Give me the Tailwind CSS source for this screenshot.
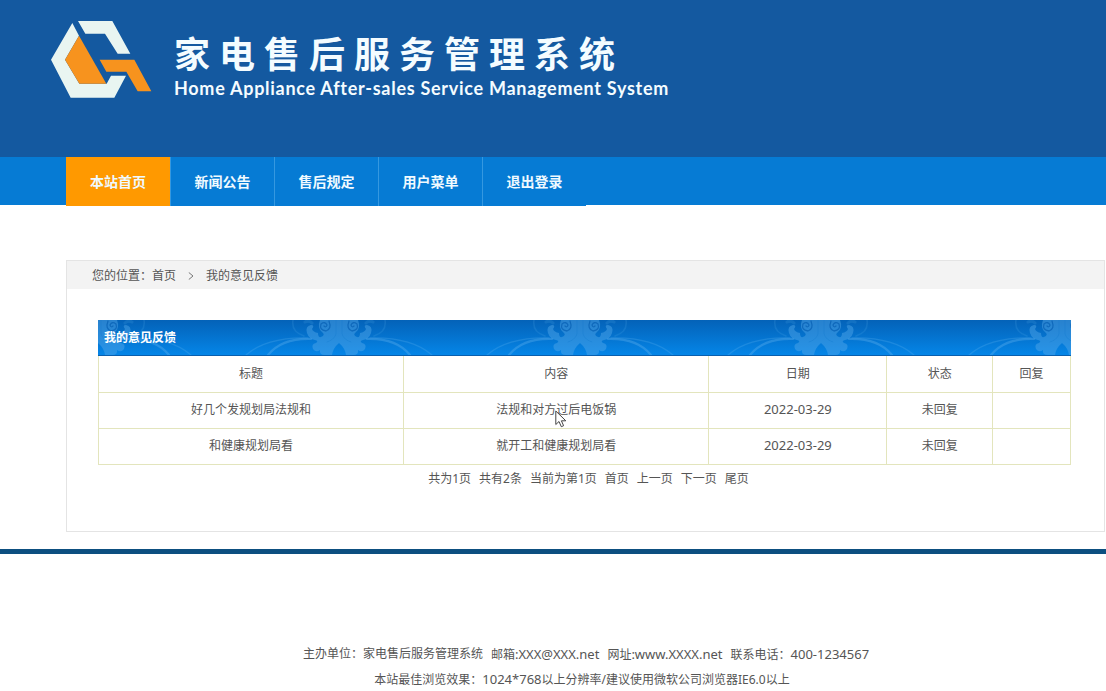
<!DOCTYPE html>
<html lang="zh-CN">
<head>
<meta charset="utf-8">
<title>家电售后服务管理系统</title>
<script src="https://cdn.jsdelivr.net/npm/@tailwindcss/browser@4"></script>
</head>
<body class="bg-white font-['Noto_Sans','Noto_Sans_CJK_SC',sans-serif] text-xs text-[#555]">
<header>
  <div class="flex h-[157px] items-start gap-[22px] bg-[#1459a0] pl-[51px] pt-[21px]">
    <svg class="h-[77px] w-[101px] shrink-0" viewBox="62 62 303 231" aria-hidden="true">
      <path fill="#e9f5f1" d="M126 68 146 106 104 178 147 250H229L242 226H287L252 292H121L62 178Z"/>
      <path fill="#e9f5f1" d="M143 62H246L300 160H262L224 100H165Z"/>
      <path fill="#f7931e" d="M146 106 228 250H147L104 178Z"/>
      <path fill="#f7931e" d="M208 178H312L363 273H322L288 214H228Z"/>
    </svg>
    <div class="pt-[13px] text-[#f4fcff]">
      <h1 class="font-['Liberation_Sans','Noto_Sans_CJK_SC',sans-serif] text-4xl/[44px] font-bold tracking-[0.25em]">家电售后服务管理系统</h1>
      <p class="font-['Lato',sans-serif] text-lg/[20px] font-bold tracking-[0.04em]">Home Appliance After-sales Service Management System</p>
    </div>
  </div>
  <nav class="h-12 bg-[#067bd4] pl-[66px]">
    <ul class="flex text-sm font-bold text-[#f0faff]">
      <li><a href="#" class="flex h-[49px] w-[104px] items-center justify-center bg-[#ff9900]">本站首页</a></li>
      <li><a href="#" class="flex h-[49px] w-[104px] items-center justify-center border-l border-[#3598e0] bg-[#067bd4]">新闻公告</a></li>
      <li><a href="#" class="flex h-[49px] w-[104px] items-center justify-center border-l border-[#3598e0] bg-[#067bd4]">售后规定</a></li>
      <li><a href="#" class="flex h-[49px] w-[104px] items-center justify-center border-l border-[#3598e0] bg-[#067bd4]">用户菜单</a></li>
      <li><a href="#" class="flex h-[49px] w-[104px] items-center justify-center border-l border-[#3598e0] bg-[#067bd4]">退出登录</a></li>
    </ul>
  </nav>
</header>

<main class="mt-[55px] mr-px ml-[66px] border border-[#e4e4e4] pb-11">
  <div class="flex h-7 items-center bg-[#f3f3f3] pt-0.5 pl-[25px]">
    <span>您的位置：</span><a href="#">首页</a>
    <svg class="mx-3 h-2 w-1.5" viewBox="0 0 6 8" fill="none" stroke="#777" aria-hidden="true"><path d="M.8.5 5 4 .8 7.5"/></svg>
    <span>我的意见反馈</span>
  </div>
  <div class="mt-[31px] mr-[33px] ml-[31px]">
    <div class="relative flex h-[36px] items-center overflow-hidden border-b border-[#0a5fae] bg-linear-to-b from-[#0462b8] to-[#0586e8] pt-px pl-1.5">
      <svg class="absolute inset-0 size-full" aria-hidden="true">
        <defs>
          <g id="half" fill="none" stroke="#5db0ee" stroke-linecap="round">
            <path stroke="none" fill="#55a8ea" d="M0 0H19Q22 8 17 12Q13 15 18 17Q21 18 21 13Q26 12 27 9Q24 5 28 5Q34 6 32 13Q30 19 24 20Q20 21 23 23Q28 24 26 29Q23 33 19 30Q20 35 14 35H7Q6 28 0 23Z" opacity=".6"/>
            <path d="M10 1Q7 9 13 11Q20 10 18 4Q14 1 12 5Q13 8 15 6" stroke="#0a62b4" stroke-width="1.3" opacity=".8"/>
            <path d="M3 0V14Q5 20 12 22" stroke="#1a7fd2" opacity=".5"/>
            <path d="M28 19Q57 18 71 35" stroke-width="2.2" opacity=".5"/>
            <path d="M31 18Q72 17 93 35" stroke-width="1.2" opacity=".35"/>
            <path d="M35 16Q48 12 46 0" stroke-width="1.5" opacity=".22"/>
            <path d="M27 3Q30 0 34 2" stroke-width="3" opacity=".22"/>
          </g>
          <pattern id="scroll" width="241" height="36" patternUnits="userSpaceOnUse">
            <use href="#half"/>
            <use href="#half" transform="translate(241 0) scale(-1 1)"/>
          </pattern>
        </defs>
        <rect width="100%" height="100%" fill="url(#scroll)" opacity=".75"/>
      </svg>
      <h2 class="relative font-bold text-white">我的意见反馈</h2>
    </div>
    <table class="w-full table-fixed border-collapse text-center">
      <colgroup><col class="w-[31.4%]"><col class="w-[31.4%]"><col class="w-[18.3%]"><col class="w-[10.9%]"><col class="w-[8%]"></colgroup>
      <thead>
        <tr class="h-9">
          <th class="border border-t-0 border-[#e3e5bd] font-normal">标题</th>
          <th class="border border-t-0 border-[#e3e5bd] font-normal">内容</th>
          <th class="border border-t-0 border-[#e3e5bd] font-normal">日期</th>
          <th class="border border-t-0 border-[#e3e5bd] font-normal">状态</th>
          <th class="border border-t-0 border-[#e3e5bd] font-normal">回复</th>
        </tr>
      </thead>
      <tbody>
        <tr class="h-9">
          <td class="border border-[#e3e5bd]">好几个发规划局法规和</td>
          <td class="relative border border-[#e3e5bd]">法规和对方过后电饭锅
            <svg class="absolute top-[17px] left-1/2 -ml-px h-[18px] w-3" viewBox="0 0 12 18" aria-hidden="true"><path d="M.8 1V14.5L4 11.5 6.3 16.7 8.6 15.7 6.4 10.8H10.8Z" fill="#fff" stroke="#444"/></svg>
          </td>
          <td class="border border-[#e3e5bd] text-[13px]">2022-03-29</td>
          <td class="border border-[#e3e5bd]">未回复</td>
          <td class="border border-[#e3e5bd]"></td>
        </tr>
        <tr class="h-9">
          <td class="border border-[#e3e5bd]">和健康规划局看</td>
          <td class="border border-[#e3e5bd]">就开工和健康规划局看</td>
          <td class="border border-[#e3e5bd] text-[13px]">2022-03-29</td>
          <td class="border border-[#e3e5bd]">未回复</td>
          <td class="border border-[#e3e5bd]"></td>
        </tr>
      </tbody>
    </table>
    <div class="mt-1.5 flex justify-center gap-2 pl-2">
      <span>共为1页</span><span>共有2条</span><span>当前为第1页</span>
      <a href="#">首页</a><a href="#">上一页</a><a href="#">下一页</a><a href="#">尾页</a>
    </div>
  </div>
</main>

<footer class="mt-[17px] border-t-5 border-[#0d4f80] pt-[88px] pl-[66px] text-center leading-6">
  <p class="flex justify-center gap-2"><span>主办单位：家电售后服务管理系统</span><span>邮箱<span class="text-[13px]">:XXX@XXX.net</span></span><span>网址<span class="text-[13px]">:www.XXXX.net</span></span><span>联系电话：<span class="text-[13px]">400-1234567</span></span></p>
  <p class="pr-2">本站最佳浏览效果：<span class="text-[13px]">1024*768</span>以上分辨率/建议使用微软公司浏览器IE6.0以上</p>
</footer>
</body>
</html>
